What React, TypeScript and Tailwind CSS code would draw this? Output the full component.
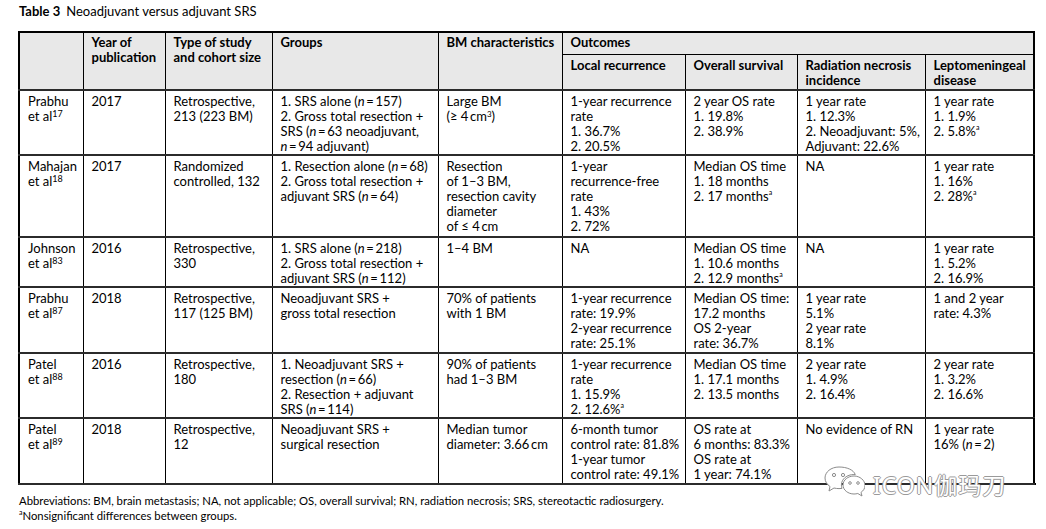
import type { ReactNode } from "react";

// n = value, with thin spaces like the journal typesetting
function N({ v }: { v: string }) {
  return (
    <>
      <i>n</i>
      {"\u2009=\u2009"}
      {v}
    </>
  );
}

function Ref({ v }: { v: string }) {
  return <sup className="text-[9px] top-[-0.45em]">{v}</sup>;
}

function A() {
  return <sup className="text-[7px] top-[-0.8em]">a</sup>;
}

type Row = {
  height: string;
  cells: ReactNode[][];
};

const rows: Row[] = [
  {
    height: "h-[65px]",
    cells: [
      ["Prabhu", <>et al<Ref v="17" /></>],
      ["2017"],
      ["Retrospective,", "213 (223 BM)"],
      [
        <>1. SRS alone (<N v="157" />)</>,
        "2. Gross total resection +",
        <>SRS (<N v="63" /> neoadjuvant,</>,
        <><N v="94" /> adjuvant)</>,
      ],
      ["Large BM", <>(≥ 4{"\u2009"}cm<sup className="text-[8px]">3</sup>)</>],
      ["1-year recurrence", "rate", "1. 36.7%", "2. 20.5%"],
      ["2 year OS rate", "1. 19.8%", "2. 38.9%"],
      ["1 year rate", "1. 12.3%", "2. Neoadjuvant: 5%,", "Adjuvant: 22.6%"],
      ["1 year rate", "1. 1.9%", <>2. 5.8%<A /></>],
    ],
  },
  {
    height: "h-[82px]",
    cells: [
      ["Mahajan", <>et al<Ref v="18" /></>],
      ["2017"],
      ["Randomized", "controlled, 132"],
      [
        <>1. Resection alone (<N v="68" />)</>,
        "2. Gross total resection +",
        <>adjuvant SRS (<N v="64" />)</>,
      ],
      ["Resection", "of 1–3 BM,", "resection cavity", "diameter", <>of ≤ 4{"\u2009"}cm</>],
      ["1-year", "recurrence-free", "rate", "1. 43%", "2. 72%"],
      ["Median OS time", "1. 18 months", <>2. 17 months<A /></>],
      ["NA"],
      ["1 year rate", "1. 16%", <>2. 28%<A /></>],
    ],
  },
  {
    height: "h-[50px]",
    cells: [
      ["Johnson", <>et al<Ref v="83" /></>],
      ["2016"],
      ["Retrospective,", "330"],
      [
        <>1. SRS alone (<N v="218" />)</>,
        "2. Gross total resection +",
        <>adjuvant SRS (<N v="112" />)</>,
      ],
      ["1–4 BM"],
      ["NA"],
      ["Median OS time", "1. 10.6 months", <>2. 12.9 months<A /></>],
      ["NA"],
      ["1 year rate", "1. 5.2%", "2. 16.9%"],
    ],
  },
  {
    height: "h-[66px]",
    cells: [
      ["Prabhu", <>et al<Ref v="87" /></>],
      ["2018"],
      ["Retrospective,", "117 (125 BM)"],
      ["Neoadjuvant SRS +", "gross total resection"],
      ["70% of patients", "with 1 BM"],
      ["1-year recurrence", "rate: 19.9%", "2-year recurrence", "rate: 25.1%"],
      ["Median OS time:", "17.2 months", "OS 2-year", "rate: 36.7%"],
      ["1 year rate", "5.1%", "2 year rate", "8.1%"],
      ["1 and 2 year", "rate: 4.3%"],
    ],
  },
  {
    height: "h-[65px]",
    cells: [
      ["Patel", <>et al<Ref v="88" /></>],
      ["2016"],
      ["Retrospective,", "180"],
      [
        "1. Neoadjuvant SRS +",
        <>resection (<N v="66" />)</>,
        "2. Resection + adjuvant",
        <>SRS (<N v="114" />)</>,
      ],
      ["90% of patients", "had 1–3 BM"],
      ["1-year recurrence", "rate", "1. 15.9%", <>2. 12.6%<A /></>],
      ["Median OS time", "1. 17.1 months", "2. 13.5 months"],
      ["2 year rate", "1. 4.9%", "2. 16.4%"],
      ["2 year rate", "1. 3.2%", "2. 16.6%"],
    ],
  },
  {
    height: "h-[66px]",
    cells: [
      ["Patel", <>et al<Ref v="89" /></>],
      ["2018"],
      ["Retrospective,", "12"],
      ["Neoadjuvant SRS +", "surgical resection"],
      ["Median tumor", <>diameter: 3.66{"\u2009"}cm</>],
      ["6-month tumor", "control rate: 81.8%", "1-year tumor", "control rate: 49.1%"],
      ["OS rate at", "6 months: 83.3%", "OS rate at", "1 year: 74.1%"],
      ["No evidence of RN"],
      ["1 year rate", <>16% (<N v="2" />)</>],
    ],
  },
];

function Lines({ lines }: { lines: ReactNode[] }) {
  return (
    <>
      {lines.map((l, i) => (
        <div key={i} className="whitespace-nowrap">
          {l}
        </div>
      ))}
    </>
  );
}

const th = "border border-black bg-[#e8e8e8] align-top text-left font-bold pl-2 pt-[2px]";
const td = "border-x border-x-black border-y-2 border-y-[#2b2b2b] align-top text-left pl-2 pt-[3px]";

function WeChatMark() {
  return (
    <svg width="42" height="34" viewBox="0 0 42 34" fill="#fff" stroke="#8c8c8c" strokeWidth="1">
      {/* back bubble */}
      <path d="M16 2C8 2 2 7 2 13c0 3.5 2 6.5 5 8.5L6 26l5-3c1.6.4 3.2.6 5 .6 1 0 2-.1 3-.2-.4-1.1-.6-2.3-.6-3.4 0-6 5.6-10.5 12.5-10.5.5 0 1 0 1.4.1C30.6 4.9 24 2 16 2z" />
      <circle cx="11" cy="10" r="1.6" />
      <circle cx="20" cy="10" r="1.6" />
      {/* front bubble */}
      <path d="M31 11c-6 0-11 4-11 9s5 9 11 9c1.3 0 2.6-.2 3.8-.5L39 31l-1-3.6c2.5-1.7 4-4.2 4-7 0-5-5-9.4-11-9.4z" />
      <circle cx="27" cy="18" r="1.3" />
      <circle cx="35" cy="18" r="1.3" />
    </svg>
  );
}

export default function App() {
  return (
    <div className="relative w-[1046px] h-[529px] overflow-hidden bg-white text-black font-['Lato','Open_Sans',sans-serif] text-[13px] leading-[15px]">
      <div className="pl-[19px] pt-[4px]">
        <span className="font-bold">Table 3</span>
        <span className="ml-[6px]">Neoadjuvant versus adjuvant SRS</span>
      </div>

      <table className="mt-[12px] ml-[18px] w-[1015px] table-fixed border-collapse border-2 border-black">
        <colgroup>
          <col className="w-[64px]" />
          <col className="w-[82px]" />
          <col className="w-[107px]" />
          <col className="w-[166px]" />
          <col className="w-[124px]" />
          <col className="w-[123px]" />
          <col className="w-[112px]" />
          <col className="w-[128px]" />
          <col className="w-[109px]" />
        </colgroup>
        <thead>
          <tr className="h-[22px]">
            <th rowSpan={2} className={th}></th>
            <th rowSpan={2} className={th}>
              <Lines lines={["Year of", "publication"]} />
            </th>
            <th rowSpan={2} className={th}>
              <Lines lines={["Type of study", "and cohort size"]} />
            </th>
            <th rowSpan={2} className={th}>
              Groups
            </th>
            <th rowSpan={2} className={th}>
              BM characteristics
            </th>
            <th colSpan={5} className={th}>
              Outcomes
            </th>
          </tr>
          <tr className="h-[36px]">
            <th className={th + " pt-[3px]"}>Local recurrence</th>
            <th className={th + " pt-[3px]"}>Overall survival</th>
            <th className={th + " pt-[3px]"}>
              <Lines lines={["Radiation necrosis", "incidence"]} />
            </th>
            <th className={th + " pt-[3px]"}>
              <Lines lines={["Leptomeningeal", "disease"]} />
            </th>
          </tr>
        </thead>
        <tbody>
          {rows.map((r, i) => (
            <tr key={i} className={r.height}>
              {r.cells.map((c, j) => (
                <td key={j} className={td}>
                  <Lines lines={c} />
                </td>
              ))}
            </tr>
          ))}
        </tbody>
      </table>

      <div className="pl-[19px] mt-[8px] text-[11.3px] leading-[15px]">
        <div>
          Abbreviations: BM, brain metastasis; NA, not applicable; OS, overall survival; RN, radiation necrosis; SRS,
          stereotactic radiosurgery.
        </div>
        <div>
          <sup className="text-[7px] top-[-0.7em]">a</sup>Nonsignificant differences between groups.
        </div>
      </div>

      {/* watermark over the table corner */}
      <div className="absolute left-[823px] top-[465px] flex items-center gap-[8px]">
        <WeChatMark />
        <span className="mt-[6px] text-[23px] tracking-[1px] leading-none text-white font-['Noto_Sans','Noto_Sans_CJK_SC',sans-serif] [text-shadow:1px_0_0_#9a9a9a,-1px_0_0_#9a9a9a,0_1px_0_#9a9a9a,0_-1px_0_#9a9a9a]">
          ICON伽玛刀
        </span>
      </div>
    </div>
  );
}
